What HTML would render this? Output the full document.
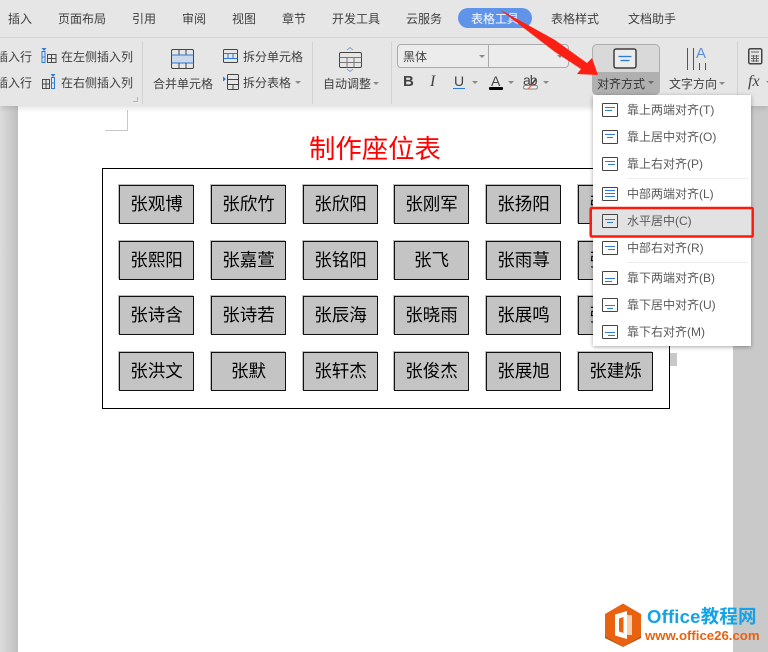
<!DOCTYPE html>
<html lang="zh"><head><meta charset="utf-8"><style>
html,body{margin:0;padding:0}
body{width:768px;height:652px;overflow:hidden;position:relative;background:#c9c9c9;font-family:"Liberation Sans","Noto Sans CJK SC",sans-serif}
.a{position:absolute;white-space:nowrap}
#ribbon{position:absolute;left:0;top:0;width:768px;height:106px;background:#e6e6e6;box-shadow:0 2px 5px rgba(0,0,0,.12)}
.tab{position:absolute;top:11px;font-size:12px;line-height:16px;color:#404040;white-space:nowrap}
.t{position:absolute;font-size:12px;line-height:16px;color:#404040;white-space:nowrap}
.sep{position:absolute;top:42px;width:1px;height:62px;background:#d2d2d2}
.c{position:absolute;width:75px;height:39px;box-sizing:border-box;background:#c4c4c4;border:1px solid #111;box-shadow:-1px -1px 0 #bcbcbc;text-align:center;font-size:17.5px;line-height:36px;color:#000}
.m{position:absolute;left:627px;font-size:12px;line-height:16px;color:#595959;white-space:nowrap}
.ic{position:absolute;left:602px;width:14px;height:12px;border:1px solid #444;border-radius:1px;background:#fff;margin-top:1px}
.ic i{position:absolute;height:1px;background:#2b7bd8;display:block}
svg{position:absolute;overflow:visible}
.arr{position:absolute;width:0;height:0;border-left:3px solid transparent;border-right:3px solid transparent;border-top:3px solid #8a8a8a}
</style></head><body>
<div class="a" style="left:18px;top:100px;width:715px;height:552px;background:#fff"></div>
<div class="a" style="left:0;top:106px;width:18px;height:546px;background:linear-gradient(90deg,#dcdcdc,#c0c0c0)"></div>

<div class="a" style="left:127px;top:110px;width:1px;height:21px;background:#c8c8c8"></div>
<div class="a" style="left:105px;top:130px;width:22px;height:1px;background:#c8c8c8"></div>

<div class="a" style="left:309px;top:132px;font-size:26.4px;line-height:34px;color:#f00">制作座位表</div>

<div class="a" style="left:102px;top:168px;width:566px;height:239px;border:1px solid #000"></div>

<div class="c" style="left:119px;top:185px">张观博</div><div class="c" style="left:211px;top:185px">张欣竹</div><div class="c" style="left:303px;top:185px">张欣阳</div><div class="c" style="left:394px;top:185px">张刚军</div><div class="c" style="left:486px;top:185px">张扬阳</div><div class="c" style="left:578px;top:185px">张梓涵</div>
<div class="c" style="left:119px;top:241px">张熙阳</div><div class="c" style="left:211px;top:241px">张嘉萱</div><div class="c" style="left:303px;top:241px">张铭阳</div><div class="c" style="left:394px;top:241px">张飞</div><div class="c" style="left:486px;top:241px">张雨荨</div><div class="c" style="left:578px;top:241px">张梓涵</div>
<div class="c" style="left:119px;top:296px">张诗含</div><div class="c" style="left:211px;top:296px">张诗若</div><div class="c" style="left:303px;top:296px">张辰海</div><div class="c" style="left:394px;top:296px">张晓雨</div><div class="c" style="left:486px;top:296px">张展鸣</div><div class="c" style="left:578px;top:296px">张梓涵</div>
<div class="c" style="left:119px;top:352px">张洪文</div><div class="c" style="left:211px;top:352px">张默</div><div class="c" style="left:303px;top:352px">张轩杰</div><div class="c" style="left:394px;top:352px">张俊杰</div><div class="c" style="left:486px;top:352px">张展旭</div><div class="c" style="left:578px;top:352px">张建烁</div>
<div class="a" style="left:670px;top:353px;width:7px;height:13px;background:#c8c8c8"></div>

<div id="ribbon">
<div class="a" style="left:0;top:37px;width:768px;height:1px;background:#d4d4d4"></div>
<div class="tab" style="left:8px">插入</div><div class="tab" style="left:58px">页面布局</div><div class="tab" style="left:132px">引用</div><div class="tab" style="left:182px">审阅</div><div class="tab" style="left:232px">视图</div><div class="tab" style="left:282px">章节</div><div class="tab" style="left:332px">开发工具</div><div class="tab" style="left:406px">云服务</div>
<div class="a" style="left:458px;top:8px;width:74px;height:20px;border-radius:10px;background:#5f94e8"></div>
<div class="tab" style="left:471px;color:#fff;top:11px">表格工具</div>
<div class="tab" style="left:551px">表格样式</div><div class="tab" style="left:628px">文档助手</div>

<div class="t" style="left:-4px;top:49px">插入行</div><div class="t" style="left:-4px;top:75px">插入行</div>
<div class="t" style="left:61px;top:49px">在左侧插入列</div><div class="t" style="left:61px;top:75px">在右侧插入列</div>
<svg style="left:41px;top:48px" width="16" height="16" fill="none" stroke="#4a4a4a"><path d="M.5 0h5L3 3z" fill="#2b7bd8" stroke="none"/><path d="M1 3.500h3v11H1zM1 9h3" stroke="#2b7bd8"/><path d="M6.500 6.500h8.500v8H6.500zM10.500 6.500v8M6.500 10.500h8.500"/></svg>
<svg style="left:41px;top:74px" width="16" height="16" fill="none" stroke="#4a4a4a"><path d="M9.500 0h5L12 3z" fill="#2b7bd8" stroke="none"/><path d="M10.500 3.500h3v11h-3zM10.500 9h3" stroke="#2b7bd8"/><path d="M1.500 5.500h7v9h-7zM5 5.500v9M1.500 10h7"/></svg>
<svg style="left:133px;top:97px" width="5" height="5" fill="none" stroke="#b5b5b5"><path d="M0 4.500h4.500V0"/></svg>
<div class="sep" style="left:142px"></div>

<svg style="left:171px;top:49px" width="23" height="20" fill="none" stroke="#444"><rect x=".5" y=".5" width="22" height="19" rx="1.500"/><rect x="1" y="6" width="21" height="8" fill="#cdd8ea" stroke="none"/><path d="M.5 6h22M.5 14h22" stroke="#2b7bd8"/><path d="M8 .5v5M15 .5v5M8 14v5M15 14v5"/></svg>
<div class="t" style="left:153px;top:76px">合并单元格</div>
<svg style="left:223px;top:49px" width="16" height="14" fill="none" stroke="#444"><rect x=".5" y=".5" width="14" height="13" rx="1"/><path d="M.5 4.500h14M.5 9.500h14M5 4.500v5M10 4.500v5" stroke="#2b7bd8"/></svg>
<div class="t" style="left:243px;top:49px">拆分单元格</div>
<svg style="left:223px;top:74px" width="16" height="16" fill="none" stroke="#444"><path d="M0 2.500l3 2.500-3 2.500z" fill="#2b7bd8" stroke="none"/><rect x="4.500" y=".5" width="11" height="15" rx="1"/><path d="M4.500 5.500h11M4.500 10.500h11M10 10.500v5"/></svg>
<div class="t" style="left:243px;top:75px">拆分表格</div><div class="arr" style="left:295px;top:81px"></div>
<div class="sep" style="left:312px"></div>

<svg style="left:339px;top:46px" width="24" height="26" fill="none" stroke="#444"><path d="M8 4l3-2.500L14 4M8 23l3 2.500L14 23" stroke="#7aa5e6"/><rect x=".5" y="6.500" width="22" height="15" rx="1.500"/><path d="M.5 11.500h22M.5 16.500h22M8 11.500v10M15 11.500v10" stroke="#777"/></svg>
<div class="t" style="left:323px;top:76px">自动调整</div><div class="arr" style="left:373px;top:82px"></div>
<div class="sep" style="left:391px"></div>

<div class="a" style="left:397px;top:44px;width:170px;height:22px;border:1px solid #ababab;border-radius:4px;background:#ececec"></div>
<div class="a" style="left:488px;top:45px;width:1px;height:22px;background:#ababab"></div>
<div class="t" style="left:403px;top:49px;color:#444">黑体</div>
<div class="arr" style="left:479px;top:55px"></div><div class="arr" style="left:557px;top:55px"></div>
<div class="a" style="left:403px;top:73px;font-weight:bold;font-size:15px;line-height:18px;color:#444">B</div>
<div class="a" style="left:430px;top:73px;font-family:'Liberation Serif',serif;font-style:italic;font-size:16px;line-height:18px;color:#444">I</div>
<div class="a" style="left:454px;top:72px;font-size:14px;line-height:18px;color:#444">U</div>
<div class="a" style="left:453px;top:88px;width:12px;height:1px;background:#2b7bd8"></div>
<div class="arr" style="left:472px;top:81px"></div>
<div class="a" style="left:491px;top:72px;font-size:14px;line-height:18px;color:#444">A</div>
<div class="a" style="left:489px;top:87px;width:14px;height:3px;background:#000;border-radius:1px"></div>
<div class="arr" style="left:508px;top:81px"></div>
<div class="a" style="left:523px;top:72px;font-size:14px;line-height:16px;color:#444;letter-spacing:-1px">ab</div>
<svg style="left:523px;top:78px" width="16" height="12" fill="none"><rect x=".5" y="7.500" width="14" height="3.500" rx="1.500" stroke="#888" fill="#f0f0f0"/><path d="M5 11l5-5" stroke="#e0584c"/><path d="M9 6l4-5" stroke="#444" stroke-width="1.500"/></svg>
<div class="arr" style="left:543px;top:81px"></div>

<div class="a" style="left:592px;top:44px;width:66px;height:49px;border:1px solid #adadad;border-radius:5px;background:#d9d9d9"></div>
<div class="a" style="left:592px;top:72px;width:68px;height:22px;border-radius:0 0 5px 5px;background:#b0b0b0"></div>
<svg style="left:613px;top:48px" width="24" height="22" fill="none"><rect x="1" y="1" width="22" height="19" rx="2" stroke="#3e3e3e" stroke-width="1.500" fill="#ececec"/><path d="M5.500 8.500h13" stroke="#2b7bd8" stroke-width="1.300"/><path d="M7.500 12.500h9" stroke="#2b7bd8" stroke-width="1.300"/></svg>
<div class="t" style="left:597px;top:76px;color:#333">对齐方式</div><div class="arr" style="left:648px;top:81px;border-top-color:#666"></div>

<svg style="left:686px;top:47px" width="26" height="24" fill="none" stroke="#555"><path d="M1.500 1v22M7.500 1v22M13.500 16v7M19.500 16v7"/></svg>
<div class="a" style="left:696px;top:45px;font-size:15px;line-height:17px;color:#5d8fdc">A</div>
<div class="t" style="left:669px;top:76px">文字方向</div><div class="arr" style="left:719px;top:82px"></div>
<div class="sep" style="left:737px"></div>

<svg style="left:748px;top:48px" width="16" height="18" fill="none" stroke="#444"><rect x=".75" y=".75" width="13" height="15" rx="1.500" stroke-width="1.500"/><path d="M3 4h8M3 8h8M3 10.500h8M3 13h8M5.500 7v7M8.500 7v7" stroke="#666"/></svg>
<div class="a" style="left:748px;top:73px;font-family:'Liberation Serif',serif;font-style:italic;font-size:16px;line-height:18px;color:#444">fx</div>
<div class="arr" style="left:766px;top:81px"></div>
</div>

<!-- menu -->
<div class="a" style="left:593px;top:95px;width:158px;height:251px;background:#fff;box-shadow:0 1px 4px rgba(0,0,0,.35)"></div>
<div class="a" style="left:592px;top:208px;width:160px;height:29px;background:#e2e2e2"></div>
<div class="a" style="left:627px;top:178px;width:121px;height:1px;background:#ececec"></div>
<div class="a" style="left:627px;top:262px;width:121px;height:1px;background:#ececec"></div>

<div class="ic" style="top:102px"><i style="left:2px;top:3px;width:10px"></i><i style="left:2px;top:6px;width:7px"></i></div><div class="m" style="top:102px">靠上两端对齐(T)</div>
<div class="ic" style="top:129px"><i style="left:2px;top:3px;width:10px"></i><i style="left:4px;top:6px;width:6px"></i></div><div class="m" style="top:129px">靠上居中对齐(O)</div>
<div class="ic" style="top:156px"><i style="left:2px;top:3px;width:10px"></i><i style="left:5px;top:6px;width:7px"></i></div><div class="m" style="top:156px">靠上右对齐(P)</div>
<div class="ic" style="top:186px"><i style="left:2px;top:2px;width:10px"></i><i style="left:2px;top:5px;width:10px"></i><i style="left:2px;top:8px;width:10px"></i></div><div class="m" style="top:186px">中部两端对齐(L)</div>
<div class="ic" style="top:213px;background:#e8e8e8"><i style="left:2px;top:4px;width:10px"></i><i style="left:4px;top:7px;width:6px"></i></div><div class="m" style="top:213px">水平居中(C)</div>
<div class="ic" style="top:240px"><i style="left:2px;top:4px;width:10px"></i><i style="left:5px;top:7px;width:7px"></i></div><div class="m" style="top:240px">中部右对齐(R)</div>
<div class="ic" style="top:270px"><i style="left:2px;top:6px;width:10px"></i><i style="left:2px;top:9px;width:7px"></i></div><div class="m" style="top:270px">靠下两端对齐(B)</div>
<div class="ic" style="top:297px"><i style="left:2px;top:6px;width:10px"></i><i style="left:4px;top:9px;width:6px"></i></div><div class="m" style="top:297px">靠下居中对齐(U)</div>
<div class="ic" style="top:324px"><i style="left:2px;top:6px;width:10px"></i><i style="left:5px;top:9px;width:7px"></i></div><div class="m" style="top:324px">靠下右对齐(M)</div>

<svg style="left:0;top:0" width="768" height="652"><rect x="590.7" y="208" width="162" height="28.500" rx="1" fill="none" stroke="#fb1a0e" stroke-width="2.500"/></svg>

<!-- arrow -->
<svg style="left:0;top:0" width="768" height="652"><path d="M499 9L555 40L587 63L592 58L598 75L577 74L581 69L555 52Z" fill="#fb1f14"/></svg>

<!-- logo -->
<svg style="left:604px;top:603px" width="38" height="44"><path d="M19 .5L37 11V33L19 43.500L1 33V11Z" fill="#e8620f"/><path d="M1 33L19 43.500L37 33V35L19 44L1 35Z" fill="#b84a08"/><path d="M11 11.500L23 8V36L11 32.500Z" fill="#fff"/><path d="M15 15.500L19.500 14V30L15 28.500Z" fill="#e8620f"/><path d="M23 12H28V32H23Z" fill="#f6cfae"/></svg>
<div class="a" style="left:647px;top:605px;font-size:18.500px;line-height:24px;font-weight:bold;color:#14a3e6;letter-spacing:.2px">Office教程网</div>
<div class="a" style="left:645px;top:628px;font-size:13.200px;line-height:16px;font-weight:bold;color:#e8620f">www.office26.com</div>
</body></html>
